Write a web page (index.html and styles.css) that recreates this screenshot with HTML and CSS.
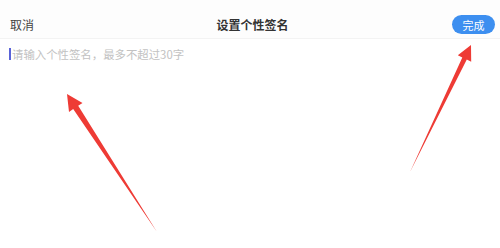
FILE: index.html
```html
<!DOCTYPE html>
<html lang="zh-CN">
<head>
<meta charset="utf-8">
<link rel="stylesheet" href="styles.css">
</head>
<body>
<div class="page">
  <header class="bar">
    <span class="cancel">取消</span>
    <span class="title">设置个性签名</span>
    <span class="done-wrap"><span class="done">完成</span></span>
  </header>
  <div class="editor">
    <span class="caret"></span><span class="placeholder">请输入个性签名，最多不超过30字</span>
  </div>
  <svg class="arrows" width="500" height="248" viewBox="0 0 500 248">
    <polygon fill="#ee3b35" points="157,232 78.2,105.8 82.5,103 67,94 69,112 73.2,109"/>
    <polygon fill="#ee3b35" points="410,172 466.8,59.6 471.2,61.8 471,45 457.8,55.2 462.3,57.4"/>
  </svg>
</div>
</body>
</html>
```
FILE: styles.css
```css
html, body {
  margin: 0;
  padding: 0;
  background: #ffffff;
}
.page {
  position: relative;
  width: 500px;
  height: 248px;
  overflow: hidden;
  font-family: "Noto Sans CJK SC", "Noto Sans", sans-serif;
}
.bar {
  display: grid;
  grid-template-columns: 1fr auto 1fr;
  align-items: center;
  height: 39px;
  box-sizing: border-box;
  padding: 15px 5px 4px 10px;
  border-bottom: 1px solid #f3f3f3;
  background: #fdfdfd;
}
.cancel {
  font-size: 12px;
  color: #444;
  line-height: 19px;
}
.title {
  font-size: 12px;
  font-weight: bold;
  color: #333;
  line-height: 19px;
}
.done-wrap {
  display: flex;
  justify-content: flex-end;
}
.done {
  display: inline-flex;
  align-items: center;
  justify-content: center;
  width: 43px;
  height: 19px;
  border-radius: 10px;
  background: #3d8ff0;
  color: #fff;
  font-size: 11px;
}
.editor {
  display: flex;
  align-items: center;
  padding: 9px 0 0 9px;
  height: 12px;
}
.caret {
  width: 2px;
  height: 12px;
  background: #5a63d8;
  margin-right: 1px;
}
.placeholder {
  font-size: 11.4px;
  color: #c2c2c2;
  line-height: 12px;
}
.arrows {
  position: absolute;
  left: 0;
  top: 0;
}
```
